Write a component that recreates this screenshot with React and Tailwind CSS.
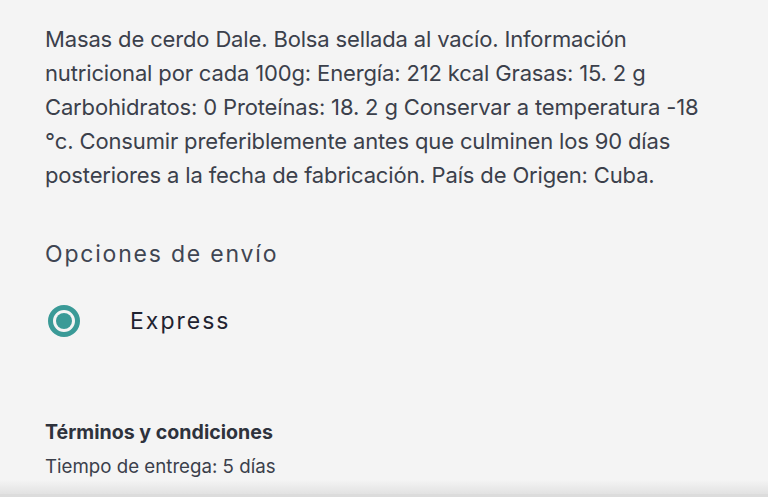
export default function App() {
  return (
    <div className="w-[768px] h-[502px] bg-[#f4f4f4] overflow-hidden flex flex-col" style={{ fontFamily: 'Inter, "Noto Sans", sans-serif' }}>
      <div className="flex-1 pl-[45px] pr-[55px] pt-[22px]">
        <p className="text-[22px] leading-[34px] text-[#3b404b] tracking-[-0.15px]">
          Masas de cerdo Dale. Bolsa sellada al vacío. Información nutricional por cada 100g: Energía: 212 kcal Grasas: 15. 2 g Carbohidratos: 0 Proteínas: 18. 2 g Conservar a temperatura -18 °c. Consumir preferiblemente antes que culminen los 90 días posteriores a la fecha de fabricación. País de Origen: Cuba.
        </p>
        <h2 className="mt-[47px] text-[23px] leading-[30px] text-[#3f4552] tracking-[1.8px]">Opciones de envío</h2>
        <div className="mt-[36px] flex items-center">
          <div className="w-[32px] h-[32px] rounded-full border-[5px] border-[#3a9a97] flex items-center justify-center ml-[3px]">
            <div className="w-[16px] h-[16px] rounded-full bg-[#3a9a97]"></div>
          </div>
          <span className="ml-[50px] text-[23px] leading-[30px] text-[#1f2330] tracking-[2px]">Express</span>
        </div>
        <h3 className="mt-[82px] text-[19.6px] leading-[26px] font-bold text-[#2e323c]">Términos y condiciones</h3>
        <p className="mt-[9px] text-[18.7px] leading-[26px] text-[#3b404b]">Tiempo de entrega: 5 días</p>
      </div>
      <div className="h-[20px] bg-gradient-to-b from-[#f4f4f4] to-[#e2e2e2]"></div>
      <div className="h-[4px] bg-[#dcdcdc]"></div>
      <div className="h-[7px] bg-white"></div>
    </div>
  );
}
